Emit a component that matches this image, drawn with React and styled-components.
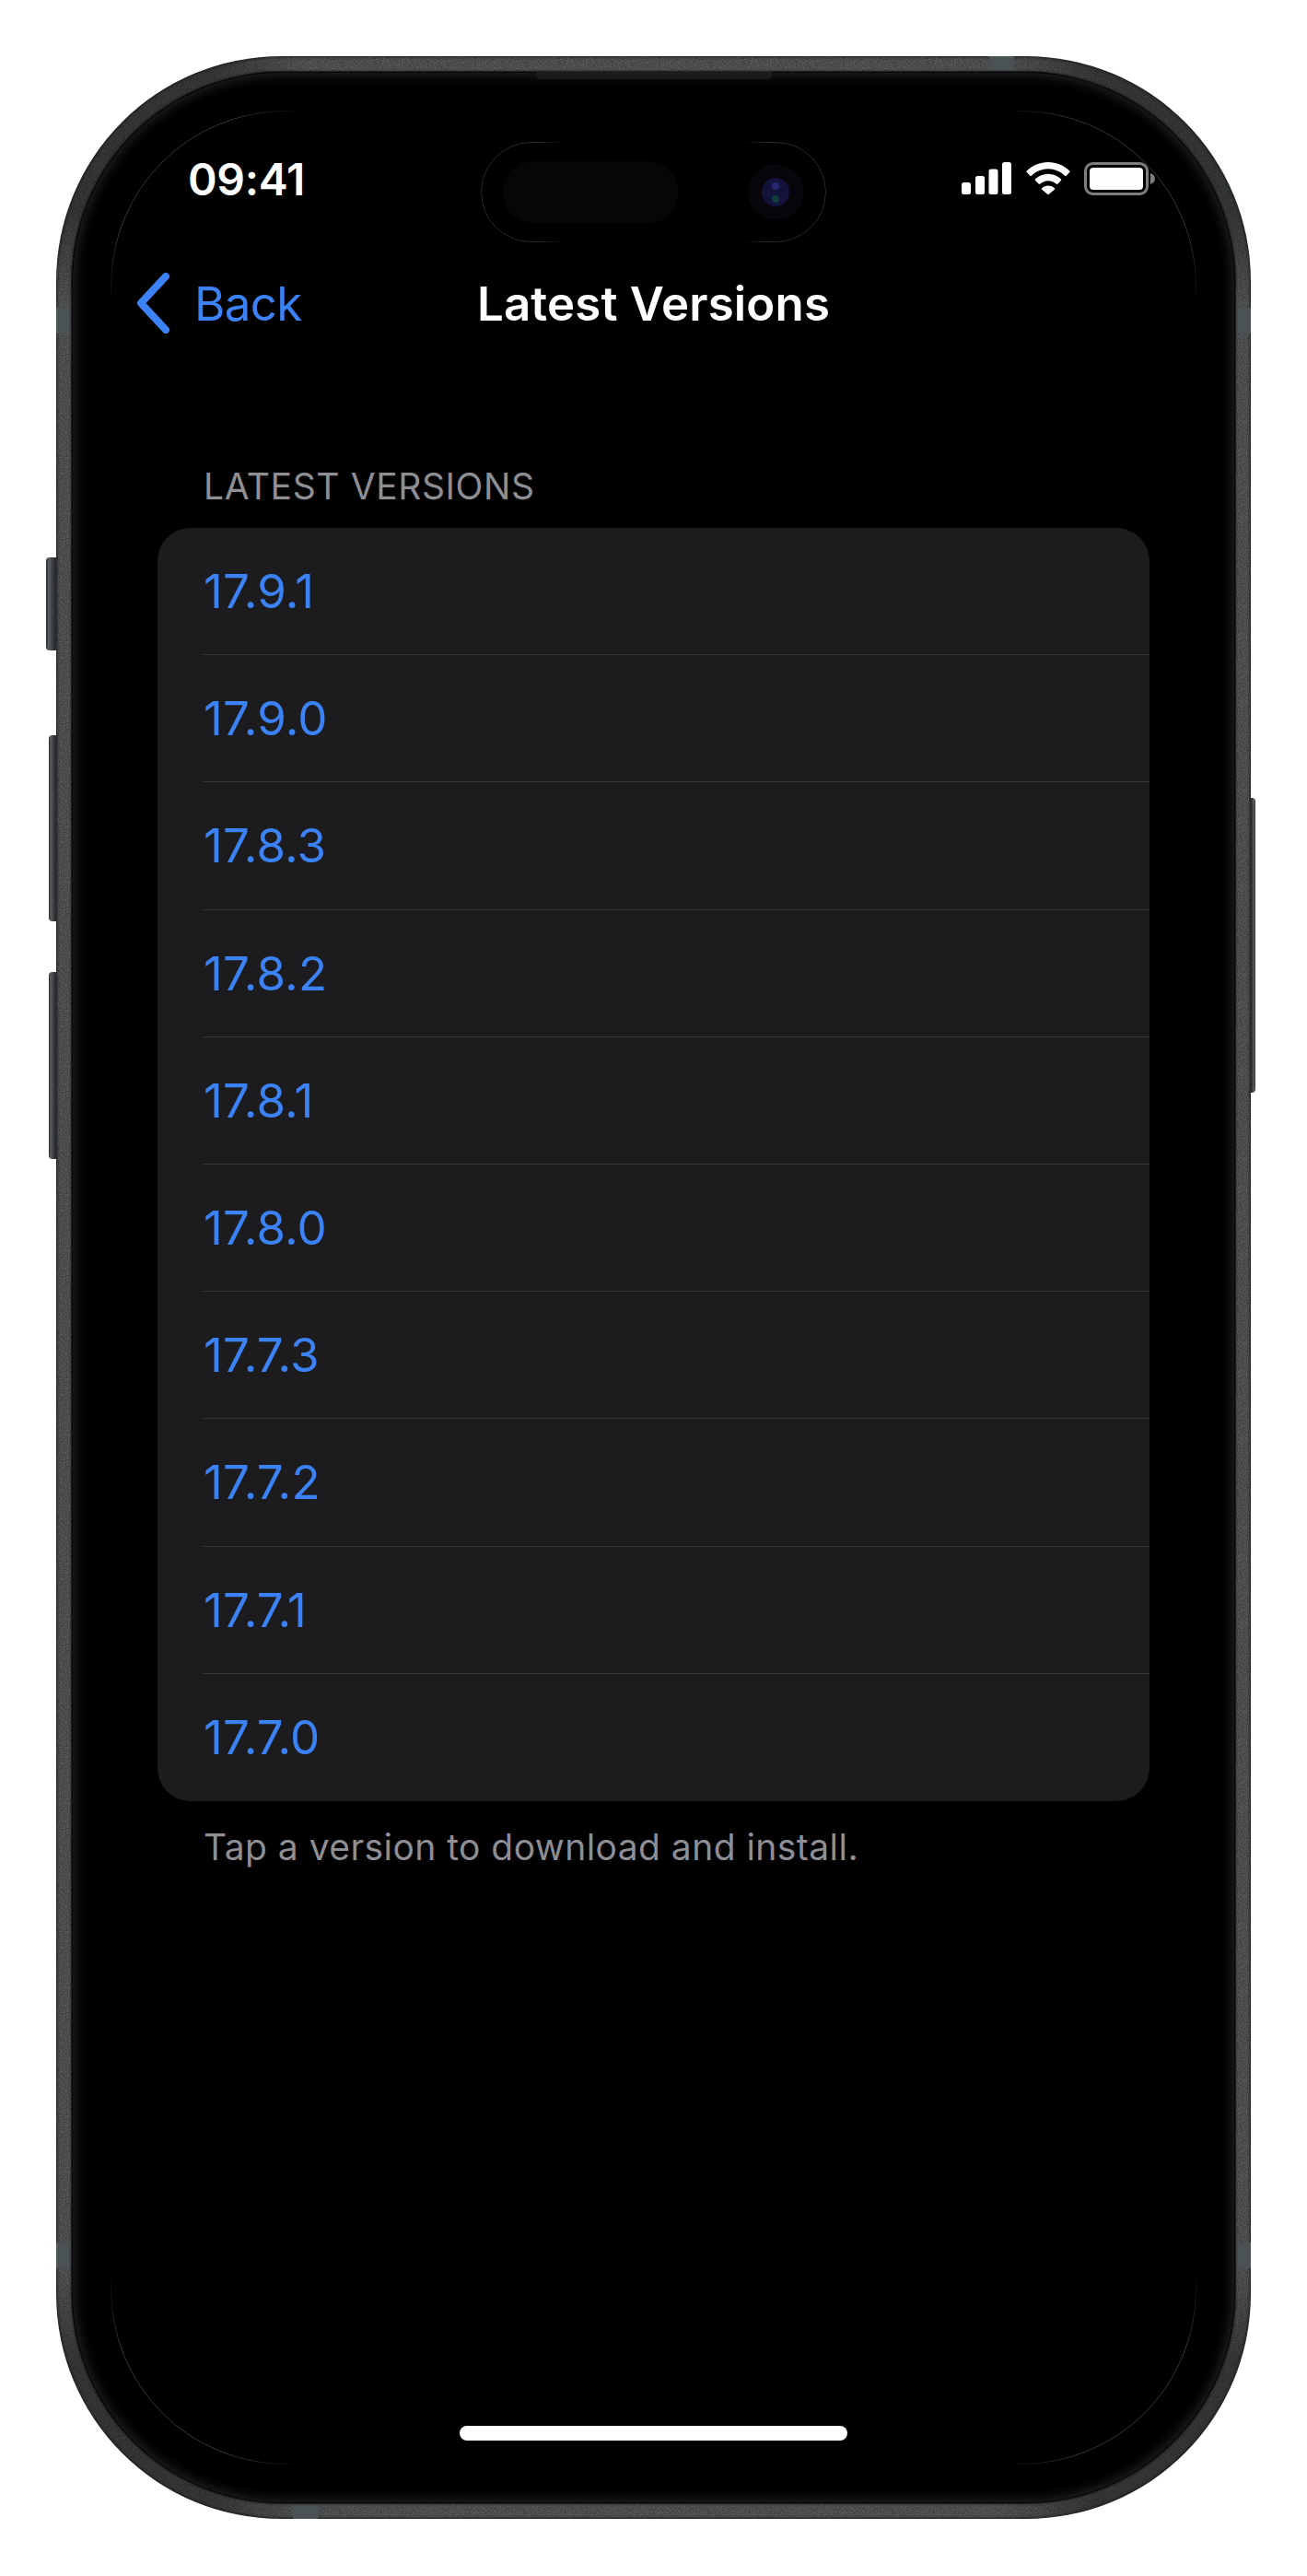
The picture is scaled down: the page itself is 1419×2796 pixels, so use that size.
import React from 'react';
import styled, { createGlobalStyle } from 'styled-components';

const noise = `url("data:image/svg+xml,%3Csvg xmlns='http://www.w3.org/2000/svg' width='200' height='200'%3E%3Cfilter id='n'%3E%3CfeTurbulence type='fractalNoise' baseFrequency='0.9' numOctaves='2' stitchTiles='stitch'/%3E%3CfeColorMatrix values='0 0 0 0 1 0 0 0 0 1 0 0 0 0 1 0 0 0 0.4 -0.1'/%3E%3C/filter%3E%3Crect width='200' height='200' filter='url(%23n)'/%3E%3C/svg%3E")`;

const GlobalStyle = createGlobalStyle`
  html, body {
    margin: 0;
    padding: 0;
    background: #fff;
  }
  body {
    font-family: Inter, "Liberation Sans", sans-serif;
  }
`;

const Page = styled.div`
  width: 1419px;
  height: 2796px;
  padding: 61px 61px 62px;
  box-sizing: border-box;
`;

const Phone = styled.div`
  position: relative;
  width: 1297px;
  height: 2673px;
  box-sizing: border-box;
  padding: 17px;
  border-radius: 244px;
  background:
    radial-gradient(circle at 0 0, rgba(18, 20, 21, 0.45) 170px, transparent 270px),
    radial-gradient(circle at 100% 0, rgba(18, 20, 21, 0.45) 170px, transparent 270px),
    radial-gradient(circle at 0 100%, rgba(18, 20, 21, 0.45) 170px, transparent 270px),
    radial-gradient(circle at 100% 100%, rgba(18, 20, 21, 0.45) 170px, transparent 270px),
    ${noise},
    #37393a;
  box-shadow: inset 0 0 3px 1px #17191a;
`;

// metal side buttons stick out of the frame
const SideButton = styled.div`
  position: absolute;
  top: ${p => p.$top}px;
  height: ${p => p.$height}px;
  width: ${p => p.$width}px;
  ${p => (p.$right ? 'right' : 'left')}: ${p => -p.$width}px;
  border-radius: ${p => (p.$right ? '0 4px 4px 0' : '4px 0 0 4px')};
  background: ${p => (p.$right
    ? 'linear-gradient(to left, #242526, #5c5f61 30%, #2a2c2e 90%)'
    : 'linear-gradient(to right, #242526, #5c5f61 25%, #2a2c2e 85%)')};
`;

const AntennaBand = styled.div`
  position: absolute;
  background: #4a5253;
  ${p => (p.$horizontal
    ? `width: 27px; height: 16px; left: ${p.$left}px; ${p.$bottom ? 'bottom: 0;' : 'top: 0;'}`
    : `width: 16px; height: 28px; top: ${p.$top}px; ${p.$right ? 'right: 0;' : 'left: 0;'}`)}
`;

const SpeakerTab = styled.div`
  position: absolute;
  top: 17px;
  left: 521px;
  width: 256px;
  height: 8px;
  background: #1b1c1c;
  border-radius: 0 0 5px 5px;
  z-index: 2;
`;

const Screen = styled.div`
  position: relative;
  height: 100%;
  box-sizing: border-box;
  padding: 0 93px;
  background: #000;
  border-radius: 228px;
  display: flex;
  flex-direction: column;
  box-shadow: 0 0 2px 1px #131415, inset 0 0 0 1px #060606, inset 0 0 14px 2px #2b2b2b;
  color: #fff;
`;

const DisplayEdge = styled.div`
  position: absolute;
  inset: 42px;
  border: 1.5px solid #3a3a3a;
  border-radius: 190px;
  -webkit-mask-image:
    linear-gradient(to right, #000 130px, transparent 205px, transparent calc(100% - 205px), #000 calc(100% - 130px)),
    linear-gradient(to bottom, #000 130px, transparent 210px, transparent calc(100% - 210px), #000 calc(100% - 130px));
  -webkit-mask-composite: source-in;
  mask-composite: intersect;
  pointer-events: none;
`;

const StatusBar = styled.div`
  height: 186px;
  flex: none;
  display: grid;
  grid-template-columns: 351px 375px 1fr;
  align-items: start;
`;

const Clock = styled.div`
  margin: 92px 0 0 33px;
  font-size: 48px;
  line-height: 50px;
  font-weight: 600;
  letter-spacing: -0.3px;
`;

const Island = styled.div`
  position: relative;
  margin-top: 76px;
  height: 109px;
  box-sizing: border-box;
  padding-left: 23px;
  display: flex;
  align-items: center;
  gap: 75px;

  &::before {
    content: '';
    position: absolute;
    inset: 0;
    border: 1px solid #2e2e2e;
    border-radius: 55px;
    -webkit-mask-image: linear-gradient(to right, #000 60px, transparent 90px, transparent calc(100% - 90px), #000 calc(100% - 60px));
    mask-image: linear-gradient(to right, #000 60px, transparent 90px, transparent calc(100% - 90px), #000 calc(100% - 60px));
  }
`;

const SensorPill = styled.div`
  width: 192px;
  height: 67px;
  flex: none;
  border-radius: 34px;
  background: #060606;
`;

const Camera = styled.svg`
  width: 60px;
  height: 61px;
  flex: none;
`;

const StatusIcons = styled.div`
  margin: 98px -6px 0 0;
  justify-self: end;
  display: flex;
  align-items: flex-start;
  gap: 15px;
`;

const NavBar = styled.div`
  position: relative;
  height: 130px;
  flex: none;
  margin: 0 -25px;
  display: flex;
  align-items: center;
  justify-content: center;
`;

const BackLink = styled.div`
  position: absolute;
  left: 0;
  top: 0;
  height: 100%;
  display: flex;
  align-items: center;
  color: #3b82f6;
  font-size: 51px;
  letter-spacing: -0.6px;
`;

const Chevron = styled.svg`
  width: 42px;
  height: 66px;
  margin-right: 23px;
`;

const Title = styled.div`
  font-size: 51px;
  font-weight: 600;
  letter-spacing: 0.15px;
`;

const Section = styled.section`
  margin-top: 110px;
`;

const SectionHeader = styled.div`
  padding-left: 50px;
  color: #8e8e93;
  font-size: 39px;
  line-height: 48px;
  height: 69px;
  letter-spacing: 0.6px;
`;

const List = styled.div`
  background: #1c1c1e;
  border-radius: 36px;
  overflow: hidden;
`;

const Row = styled.div`
  position: relative;
  height: 138.2px;
  box-sizing: border-box;
  margin-left: 50px;
  display: flex;
  align-items: center;
  color: #3b82f6;
  font-size: 51px;
  letter-spacing: 0.2px;
  border-bottom: ${p => (p.$last ? 'none' : '1.5px solid #39393b')};
`;

const SectionFooter = styled.div`
  padding: 26px 0 0 50px;
  color: #8e8e93;
  font-size: 39px;
  line-height: 48px;
  letter-spacing: 0.45px;
`;

const HomeIndicator = styled.div`
  margin-top: auto;
  margin-bottom: 68px;
  align-self: center;
  width: 421px;
  height: 16px;
  flex: none;
  border-radius: 8px;
  background: #fff;
`;

const versions = ['17.9.1', '17.9.0', '17.8.3', '17.8.2', '17.8.1', '17.8.0', '17.7.3', '17.7.2', '17.7.1', '17.7.0'];

const SignalIcon = () => (
  <svg width="55" height="35" viewBox="0 0 55 35" fill="#fff">
    <rect x="0" y="22" width="10" height="13" rx="2.5" />
    <rect x="15" y="15" width="10" height="20" rx="2.5" />
    <rect x="29.5" y="7.5" width="10" height="27.5" rx="2.5" />
    <rect x="44" y="0" width="10" height="35" rx="2.5" />
  </svg>
);

const WifiIcon = () => (
  <svg width="48" height="35" viewBox="0 0 48 35" fill="#fff">
    <path d="M24 0C15 0 7 3.5 0.8 9.4c-.5.5-.5 1.2 0 1.7l3.5 3.6c.5.5 1.2.5 1.700 0C10.800 10 17 7.200 24 7.200s13.200 2.800 18 7.500c.5.5 1.200.5 1.700 0l3.500-3.600c.5-.5.5-1.200 0-1.700C41 3.500 33 0 24 0Z" />
    <path d="M24 12.800c-5.400 0-10.200 2.100-13.900 5.500-.5.500-.5 1.200 0 1.700l3.500 3.600c.5.500 1.200.5 1.700 0 2.300-2 5.300-3.300 8.700-3.300s6.400 1.300 8.700 3.300c.5.500 1.200.5 1.700 0l3.500-3.600c.5-.5.500-1.200 0-1.700-3.700-3.400-8.500-5.500-13.900-5.500Z" />
    <path d="M24 25.600c-2.700 0-5 1-6.800 2.600-.5.500-.5 1.100 0 1.600l5.900 5c.5.400 1.300.400 1.800 0l5.900-5c.5-.5.500-1.100 0-1.600C29 26.600 26.700 25.600 24 25.600Z" />
  </svg>
);

const BatteryIcon = () => (
  <svg width="77" height="36" viewBox="0 0 77 36">
    <rect x="1.500" y="1.500" width="67" height="33" rx="8" fill="none" stroke="#7d7d7d" strokeWidth="3" />
    <rect x="6" y="6" width="58" height="24" rx="4" fill="#fff" />
    <path d="M72 12c3 1 5 3.200 5 6s-2 5-5 6Z" fill="#7d7d7d" />
  </svg>
);

const App = () => (
  <>
    <GlobalStyle />
    <Page>
      <Phone>
        <SideButton $top={544} $height={101} $width={11} />
        <SideButton $top={737} $height={202} $width={8} />
        <SideButton $top={994} $height={203} $width={8} />
        <SideButton $right $top={805} $height={320} $width={5} />
        <AntennaBand $horizontal $left={1013} />
        <AntennaBand $horizontal $bottom $left={257} />
        <AntennaBand $top={273} />
        <AntennaBand $top={273} $right />
        <AntennaBand $top={2373} />
        <AntennaBand $top={2373} $right />
        <SpeakerTab />
        <Screen>
          <DisplayEdge />
          <StatusBar>
            <Clock>09:41</Clock>
            <Island>
              <SensorPill />
              <Camera viewBox="0 0 60 61">
                <ellipse cx="30" cy="30.500" rx="30" ry="30.500" fill="#08060a" />
                <ellipse cx="30" cy="30.500" rx="15" ry="15.500" fill="#12123a" />
                <circle cx="30" cy="24" r="4" fill="#28286e" />
                <circle cx="30" cy="38" r="4" fill="#123c3c" />
              </Camera>
            </Island>
            <StatusIcons>
              <SignalIcon />
              <WifiIcon />
              <BatteryIcon />
            </StatusIcons>
          </StatusBar>
          <NavBar>
            <BackLink>
              <Chevron viewBox="0 0 42 66" fill="none">
                <path d="M34 4 7 33l27 29" stroke="#3b82f6" strokeWidth="8" strokeLinecap="round" strokeLinejoin="round" />
              </Chevron>
              Back
            </BackLink>
            <Title>Latest Versions</Title>
          </NavBar>
          <Section>
            <SectionHeader>LATEST VERSIONS</SectionHeader>
            <List>
              {versions.map((version, index) => (
                <Row key={version} $last={index === versions.length - 1}>{version}</Row>
              ))}
            </List>
            <SectionFooter>Tap a version to download and install.</SectionFooter>
          </Section>
          <HomeIndicator />
        </Screen>
      </Phone>
    </Page>
  </>
);

export default App;
